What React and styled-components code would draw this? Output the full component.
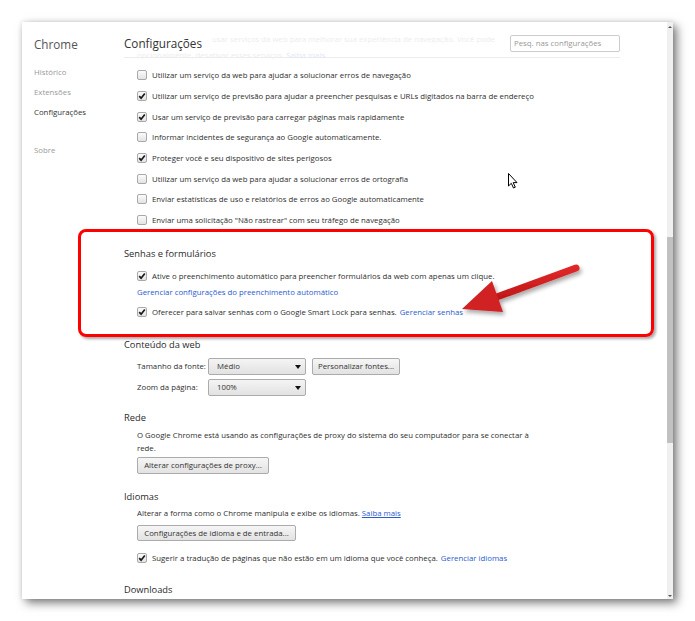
import React from "react";
import styled, { createGlobalStyle } from "styled-components";

const GlobalStyle = createGlobalStyle`
  html, body { margin: 0; padding: 0; background: #fff; }
  body { font-family: "Open Sans", "Noto Sans", sans-serif; color: #333; }
`;

// página inteira
const Page = styled.div`
  position: relative;
  width: 695px;
  height: 621px;
  overflow: hidden;
  box-sizing: border-box;
  padding: 22px 0 0 22px;
  background: #fff;
`;

// janela do chrome
const Frame = styled.div`
  position: relative;
  width: 651px;
  height: 577px;
  display: flex;
  background: #fff;
  overflow: hidden;
  box-shadow: 4px 4px 9px rgba(0, 0, 0, 0.5), 0 0 5px rgba(0, 0, 0, 0.12);
`;

const Sidebar = styled.nav`
  width: 102px;
  flex: none;
  box-sizing: border-box;
  padding: 14px 0 0 12px;
`;

const SideTitle = styled.div`
  font-size: 11.7px;
  line-height: 16px;
  color: #555;
  margin-bottom: 10px;
`;

const SideItem = styled.div`
  font-size: 7.8px;
  line-height: 20px;
  color: ${(p) => (p.$active ? "#333" : "#999")};
  margin-top: ${(p) => p.$gap || 0}px;
`;

const Main = styled.main`
  flex: 1;
  min-width: 0;
  display: flex;
  flex-direction: column;
`;

const Header = styled.header`
  position: relative;
  width: 496px;
  height: 36px;
  flex: none;
  box-sizing: border-box;
  padding-top: 8px;
  display: flex;
  align-items: center;
  justify-content: space-between;
  border-bottom: 1px solid #ececec;
`;

// texto rolado por baixo do cabeçalho translúcido
const Faded = styled.div`
  position: absolute;
  left: ${(p) => p.$left}px;
  top: ${(p) => p.$top}px;
  width: ${(p) => p.$w}px;
  overflow: hidden;
  font-size: 7.8px;
  line-height: 8px;
  color: #ededed;
  white-space: nowrap;
  a { color: #e3e7f5; text-decoration: underline; }
`;

const PageTitle = styled.h1`
  position: relative;
  z-index: 1;
  margin: 0;
  padding-right: 6px;
  font-size: 11.7px;
  line-height: 11px;
  font-weight: 400;
  color: #333;
`;

const Search = styled.div`
  position: relative;
  z-index: 1;
  width: 110px;
  height: 17px;
  box-sizing: border-box;
  border: 1px solid #ccc;
  border-radius: 2px;
  background: #fff;
  font-size: 7.8px;
  line-height: 15px;
  padding-left: 3px;
  color: #999;
`;

const Content = styled.div`
  padding-top: 7px;
  width: 496px;
`;

const Section = styled.section`
  margin-top: ${(p) => p.$gap || 0}px;
`;

const SectionTitle = styled.h3`
  margin: 0;
  font-size: 9.3px;
  line-height: 14px;
  font-weight: 400;
  color: #2a2a2a;
`;

const Row = styled.div`
  display: flex;
  align-items: center;
  height: ${(p) => p.$h || 20}px;
  margin-top: ${(p) => p.$gap || 0}px;
  padding-left: 13px;
  font-size: 7.8px;
  color: #2e2e2e;
  white-space: nowrap;
`;

const Box = styled.span`
  width: 8px;
  height: 8px;
  flex: none;
  margin-right: 5px;
  border: 1px solid #a9a9a9;
  border-radius: 2px;
  background: linear-gradient(#fbfbfb, #e3e3e3);
  display: flex;
  align-items: center;
  justify-content: center;
  svg { display: block; }
`;

const Link = styled.a`
  color: #2a5bd0;
  text-decoration: ${(p) => (p.$under ? "underline" : "none")};
  margin-left: ${(p) => (p.$space ? 3 : 0)}px;
`;

const Text = styled.div`
  padding-left: 13px;
  margin-top: ${(p) => p.$gap || 0}px;
  font-size: 7.8px;
  line-height: 13px;
  color: #2e2e2e;
  white-space: nowrap;
`;

const Label = styled.span`
  width: 71px;
  flex: none;
`;

const Select = styled.div`
  position: relative;
  width: 98px;
  height: 17px;
  box-sizing: border-box;
  border: 1px solid #ababab;
  border-radius: 2px;
  background: linear-gradient(#f4f4f4, #e2e2e2);
  padding-left: 8px;
  line-height: 15px;
  color: #333;
  &::after {
    content: "";
    position: absolute;
    right: 4px;
    top: 6px;
    border-left: 3.5px solid transparent;
    border-right: 3.5px solid transparent;
    border-top: 4px solid #111;
  }
`;

const Button = styled.div`
  display: inline-flex;
  align-items: center;
  justify-content: center;
  width: ${(p) => p.$w}px;
  height: ${(p) => p.$h || 17}px;
  margin-left: ${(p) => p.$ml || 0}px;
  box-sizing: border-box;
  border: 1px solid #ababab;
  border-radius: 2px;
  background: linear-gradient(#f6f6f6, #e2e2e2);
  font-size: 7.8px;
  color: #333;
  white-space: nowrap;
`;

const ButtonRow = styled.div`
  padding-left: 13px;
  margin-top: ${(p) => p.$gap || 0}px;
  display: flex;
`;

const Scrollbar = styled.div`
  width: 6px;
  flex: none;
  margin-left: auto;
  background: #f0f0f0;
  display: flex;
  flex-direction: column;
  align-items: center;
  position: relative;
`;

const Thumb = styled.div`
  width: 6px;
  height: ${(p) => p.$size}px;
  margin-top: ${(p) => p.$offset}px;
  background: #c1c1c1;
`;

const Arrow = styled.span`
  position: absolute;
  left: 1px;
  ${(p) => (p.$down ? "bottom: 2px;" : "top: 4px;")}
  border-left: 2px solid transparent;
  border-right: 2px solid transparent;
  ${(p) => (p.$down ? "border-top: 2px solid #555;" : "border-bottom: 2px solid #555;")}
`;

// anotação vermelha por cima do conteúdo
const Highlight = styled.div`
  position: absolute;
  left: 56px;
  top: 207px;
  width: 576px;
  height: 108px;
  box-sizing: border-box;
  border: 3px solid #ff0000;
  border-radius: 8px;
  box-shadow: 2px 2px 3px rgba(0, 0, 0, 0.35);
  pointer-events: none;
`;

const Overlay = styled.svg`
  position: absolute;
  left: 0;
  top: 0;
  pointer-events: none;
`;

function Check({ on }) {
  return (
    <Box>
      {on && (
        <svg width="8" height="8" viewBox="0 0 8 8">
          <path d="M1.2 4.2 L3.1 6.2 L6.8 1.4" stroke="#1a1a1a" strokeWidth="1.7" fill="none" />
        </svg>
      )}
    </Box>
  );
}

const privacy = [
  [false, "Utilizar um serviço da web para ajudar a solucionar erros de navegação"],
  [true, "Utilizar um serviço de previsão para ajudar a preencher pesquisas e URLs digitados na barra de endereço"],
  [true, "Usar um serviço de previsão para carregar páginas mais rapidamente"],
  [false, "Informar incidentes de segurança ao Google automaticamente."],
  [true, "Proteger você e seu dispositivo de sites perigosos"],
  [false, "Utilizar um serviço da web para ajudar a solucionar erros de ortografia"],
  [false, "Enviar estatísticas de uso e relatórios de erros ao Google automaticamente"],
  [false, "Enviar uma solicitação \"Não rastrear\" com seu tráfego de navegação"],
];

function App() {
  return (
    <Page>
      <GlobalStyle />
      <Frame>
        <Sidebar>
          <SideTitle>Chrome</SideTitle>
          <SideItem>Histórico</SideItem>
          <SideItem>Extensões</SideItem>
          <SideItem $active>Configurações</SideItem>
          <SideItem $gap={18}>Sobre</SideItem>
        </Sidebar>

        <Main>
          <Header>
            <Faded $left={88} $top={13} $w={294}>
              usar serviços da web para melhorar sua experiência de navegação. Você pode
            </Faded>
            <Faded $left={13} $top={29} $w={300}>
              opcionalmente, desativar esses serviços. <a>Saiba mais</a>
            </Faded>
            <PageTitle>Configurações</PageTitle>
            <Search>Pesq. nas configurações</Search>
          </Header>

          <Content>
            <Section>
              {privacy.map(([on, label], i) => (
                <Row key={i} $h={20.7}>
                  <Check on={on} />
                  {label}
                </Row>
              ))}
            </Section>

            <Section $gap={16.4}>
              <SectionTitle>Senhas e formulários</SectionTitle>
              <Row $gap={5}>
                <Check on />
                Ative o preenchimento automático para preencher formulários da web com apenas um clique.
              </Row>
              <Text>
                <Link>Gerenciar configurações do preenchimento automático</Link>
              </Text>
              <Row $gap={3}>
                <Check on />
                Oferecer para salvar senhas com o Google Smart Lock para senhas.
                <Link $space>Gerenciar senhas</Link>
              </Row>
            </Section>

            <Section $gap={16}>
              <SectionTitle>Conteúdo da web</SectionTitle>
              <Row $h={17} $gap={6}>
                <Label>Tamanho da fonte:</Label>
                <Select>Médio</Select>
                <Button $w={88} $ml={6}>Personalizar fontes...</Button>
              </Row>
              <Row $h={17} $gap={4}>
                <Label>Zoom da página:</Label>
                <Select>100%</Select>
              </Row>
            </Section>

            <Section $gap={15}>
              <SectionTitle>Rede</SectionTitle>
              <Text $gap={4.5}>
                O Google Chrome está usando as configurações de proxy do sistema do seu computador para se conectar à
                <br />
                rede.
              </Text>
              <ButtonRow $gap={1.5}>
                <Button $w={132}>Alterar configurações de proxy...</Button>
              </ButtonRow>
            </Section>

            <Section $gap={16}>
              <SectionTitle>Idiomas</SectionTitle>
              <Text $gap={3.5}>
                Alterar a forma como o Chrome manipula e exibe os idiomas. <Link $under>Saiba mais</Link>
              </Text>
              <ButtonRow $gap={4.5}>
                <Button $w={159} $h={16}>Configurações de idioma e de entrada...</Button>
              </ButtonRow>
              <Row $gap={7}>
                <Check on />
                Sugerir a tradução de páginas que não estão em um idioma que você conheça.
                <Link $space>Gerenciar idiomas</Link>
              </Row>
            </Section>

            <Section $gap={15}>
              <SectionTitle>Downloads</SectionTitle>
            </Section>
          </Content>
        </Main>

        <Scrollbar>
          <Arrow />
          <Thumb $offset={215} $size={206} />
          <Arrow $down />
        </Scrollbar>

        <Highlight />
      </Frame>

      <Overlay width="695" height="621" viewBox="0 0 695 621">
        <defs>
          <filter id="sh" x="-20%" y="-20%" width="140%" height="160%">
            <feDropShadow dx="2" dy="3" stdDeviation="2" floodColor="#000" floodOpacity="0.35" />
          </filter>
          <linearGradient id="red" x1="0" y1="0" x2="0" y2="1">
            <stop offset="0" stopColor="#e02828" />
            <stop offset="1" stopColor="#c01818" />
          </linearGradient>
        </defs>
        <g filter="url(#sh)">
          <line x1="576" y1="268" x2="494" y2="298" stroke="url(#red)" strokeWidth="7" strokeLinecap="round" />
          <polygon points="462,309 492,281 503,312" fill="#d02020" />
        </g>
        {/* cursor do mouse */}
        <path
          d="M508.5 173.5 L508.5 186 L511.3 183.3 L513.5 188 L515.3 187.2 L513.2 182.6 L517 182.6 Z"
          fill="#fff"
          stroke="#000"
          strokeWidth="1"
          strokeLinejoin="round"
        />
      </Overlay>
    </Page>
  );
}

export default App;
